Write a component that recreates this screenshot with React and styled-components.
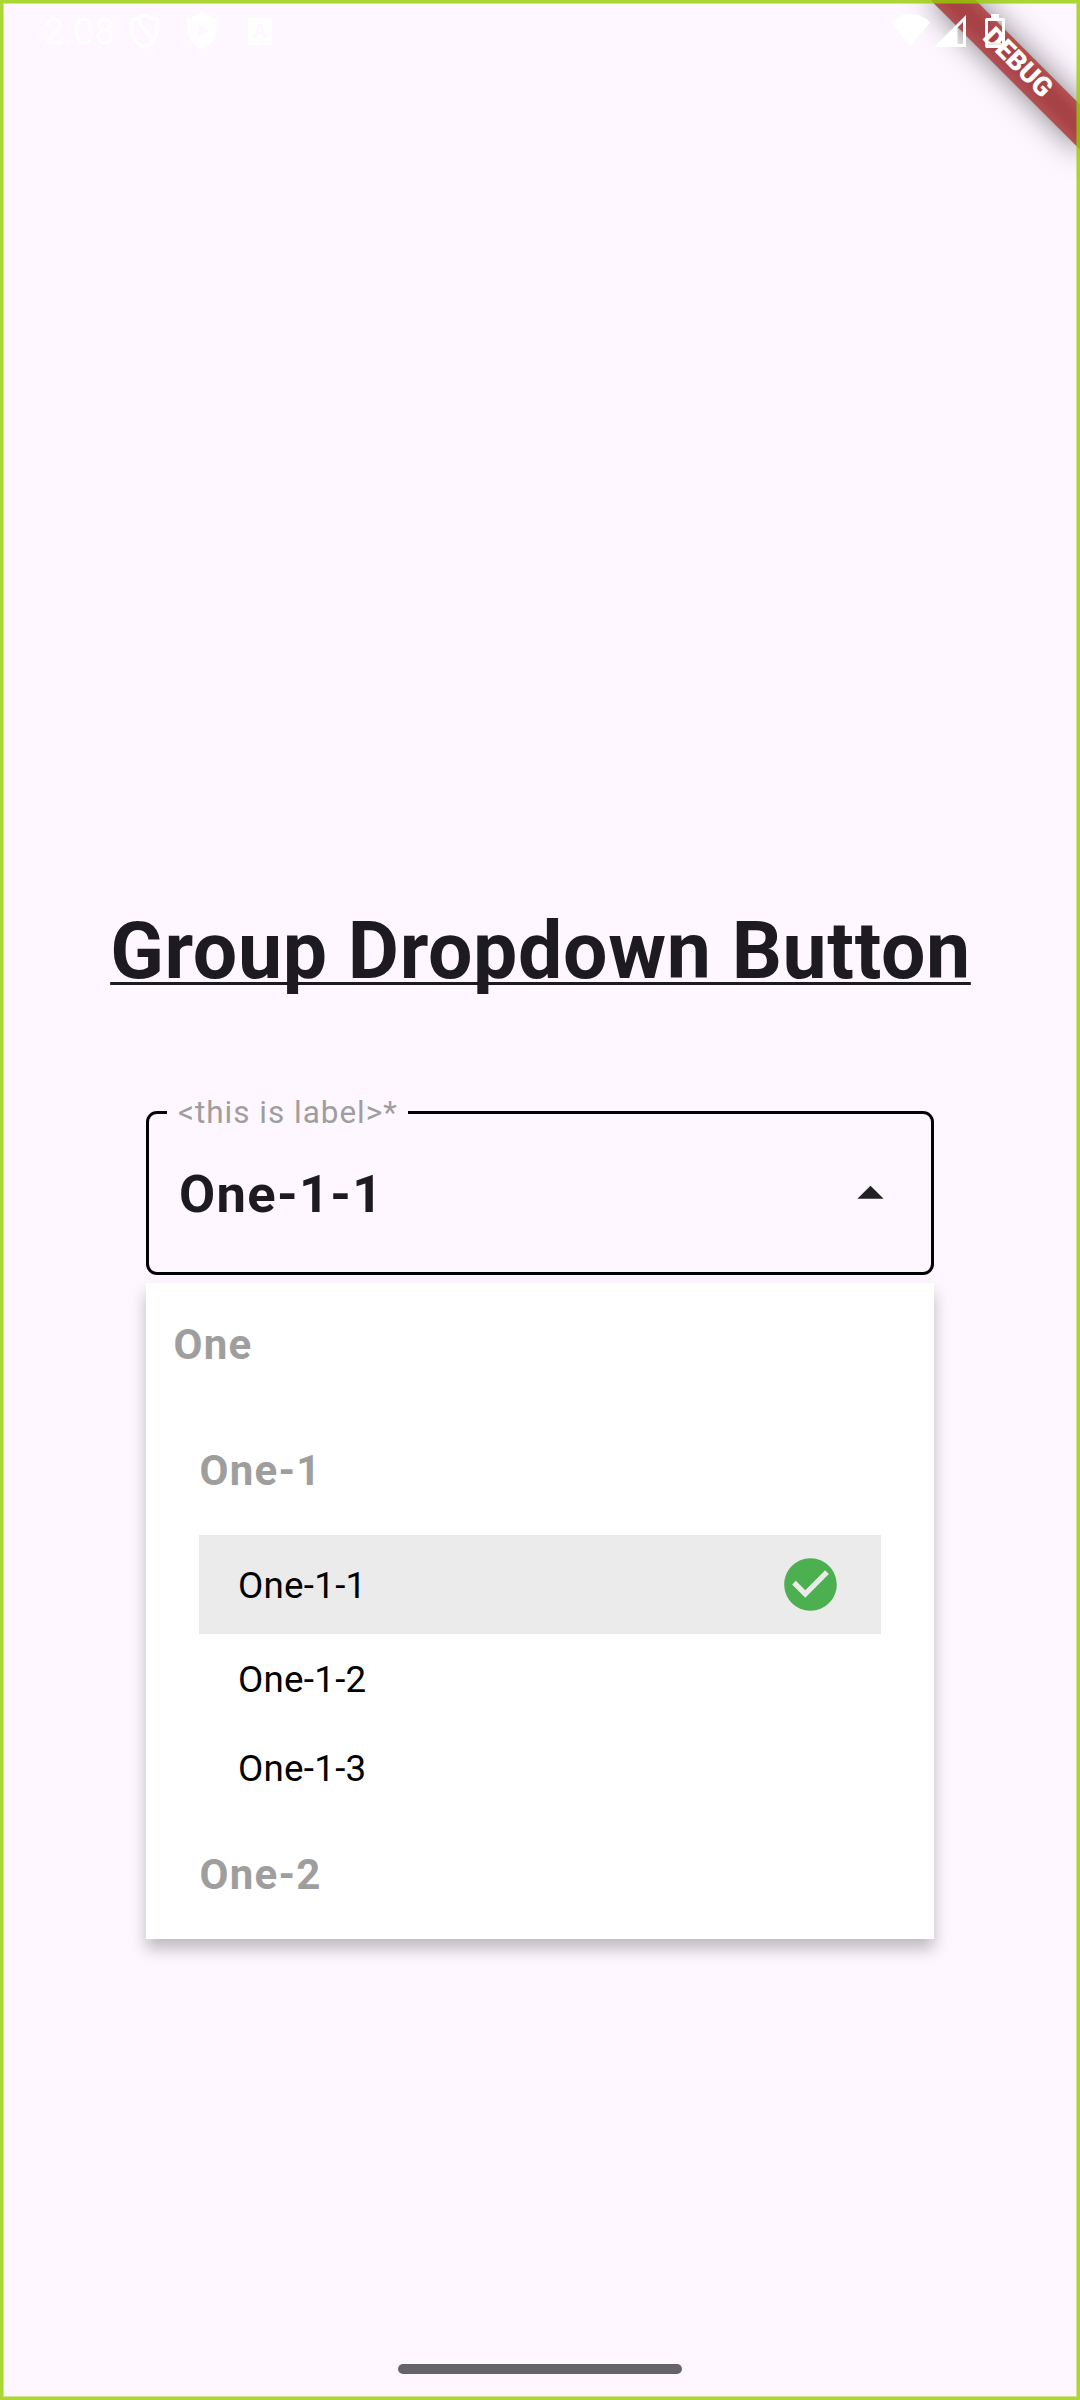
import React from "react";
import styled, { createGlobalStyle } from "styled-components";

const GlobalStyle = createGlobalStyle`
  *, *::before, *::after { box-sizing: border-box; }
  body {
    margin: 0;
    background: #fef7ff;
    font-family: Roboto, "Liberation Sans", sans-serif;
  }
`;

const Screen = styled.div`
  position: relative;
  display: flex;
  flex-direction: column;
  align-items: center;
  width: 1080px;
  height: 2400px;
  overflow: hidden;
  background: #fef7ff;
`;

const Frame = styled.div`
  position: absolute;
  inset: 0;
  border: 3px solid rgba(150, 205, 0, 0.8);
  box-shadow: inset 0 0 0 1px rgba(150, 205, 0, 0.45);
  pointer-events: none;
`;

const Ribbon = styled.div`
  position: absolute;
  top: 73.5px;
  right: -105px;
  width: 210px;
  height: 31.5px;
  transform: rotate(45deg);
  transform-origin: 105px -73.5px;
  background: linear-gradient(#b35053, #a74346 35%, #a74346 65%, #b35053);
  box-shadow: 0 0 31px rgba(0, 0, 0, 0.5);
  color: #fff;
  font-size: 26.775px;
  font-weight: 900;
  line-height: 28px;
  text-align: center;
`;

const StatusBar = styled.header`
  position: relative;
  display: flex;
  align-items: flex-start;
  justify-content: space-between;
  width: 100%;
  height: 63px;
  padding: 13px 75px 0 43px;
  color: #fff;
`;

const StatusGroup = styled.div`
  display: flex;
  align-items: flex-start;
`;

const Clock = styled.span`
  width: 87px;
  font-size: 37.5px;
  line-height: 36px;
`;

const Glyph = styled.svg`
  display: block;
  flex: none;
  width: ${(p) => p.$w}px;
  height: ${(p) => p.$h}px;
  margin-right: ${(p) => p.$gap || 0}px;
`;

const Title = styled.h1`
  margin: 842px 0 0 1px;
  font-size: 78.75px;
  font-weight: 700;
  line-height: 92px;
  letter-spacing: 0.656px;
  color: #1d1b20;
  white-space: nowrap;
  text-decoration: underline;
  text-decoration-thickness: 3px;
  text-decoration-skip-ink: none;
  text-underline-offset: 4px;
`;

const Field = styled.fieldset`
  width: 788px;
  height: 181px;
  min-width: 0;
  margin: 97px 0 0;
  padding: 0 29px 0 30px;
  border: 3px solid #000;
  border-radius: 11px;
`;

const Legend = styled.legend`
  width: 241px;
  height: 36px;
  margin-left: -12px;
  padding: 0 0 0 11px;
  font-size: 31.5px;
  line-height: 38px;
  letter-spacing: 0.984px;
  color: #9e9e9e;
  white-space: nowrap;
`;

const FieldBody = styled.div`
  display: flex;
  align-items: center;
  justify-content: space-between;
  height: 126px;
`;

const Value = styled.span`
  padding-top: 2px;
  font-size: 52.5px;
  font-weight: 700;
  line-height: 62px;
  letter-spacing: 1.3125px;
  color: #1d1b20;
`;

const Menu = styled.div`
  width: 788px;
  height: 656px;
  margin-top: 8px;
  padding: 0 53px;
  background: #fff;
  box-shadow: 0 10px 15px rgba(0, 0, 0, 0.25);
`;

const GroupLabel = styled.div`
  display: flex;
  align-items: center;
  height: ${(p) => p.$height}px;
  margin-left: ${(p) => (p.$root ? -26 : 0)}px;
  padding: 0 0 2px 0.4px;
  font-size: 42px;
  font-weight: 700;
  letter-spacing: 1.3125px;
  color: #9e9e9e;
`;

const Option = styled.div`
  display: flex;
  align-items: center;
  justify-content: space-between;
  height: ${(p) => (p.$selected ? 99 : 89)}px;
  padding: 0 39px;
  background: ${(p) => (p.$selected ? "#ebebeb" : "transparent")};
  color: #000;
  font-size: 36.75px;
  letter-spacing: 0.2625px;

  span { padding-top: 2px; }
`;

const NavHandle = styled.div`
  width: 284px;
  height: 10px;
  margin-top: 425px;
  border-radius: 5px;
  background: #666468;
`;

function ShieldIcon() {
  return (
    <Glyph $w={29} $h={36} $gap={28} viewBox="0 0 29 36">
      <path d="M14.5 2.500 27 7V17c0 8-5 14-12.500 17C7 31 2 25 2 17V7z" fill="none" stroke="#fff" strokeWidth="3.5" />
      <path d="M10 5v4c0 8 11 8 11 18" fill="none" stroke="#fff" strokeWidth="3.5" />
    </Glyph>
  );
}

function PlayShieldIcon() {
  return (
    <Glyph $w={30} $h={36} $gap={31} viewBox="0 0 30 36">
      <path fillRule="evenodd" fill="#fff" d="M15 0 29.500 5V17c0 9-6 16-14.500 19C6.500 33 .5 26 .5 17V5zM11 11v13l11-6.500z" />
    </Glyph>
  );
}

function KeyboardIcon() {
  return (
    <Glyph $w={24} $h={33} viewBox="0 -5 24 33">
      <path
        fillRule="evenodd"
        fill="#fff"
        d="M2 0h20a2 2 0 0 1 2 2v23a2 2 0 0 1-2 2H2a2 2 0 0 1-2-2V2a2 2 0 0 1 2-2zM10 6 5.500 20h3l1-3.500h5l1 3.500h3L14 6zM12 9.500l1.700 4.500h-3.400zM13 23v2h2v-2zM17 23v2h2v-2zM20.500 23v2h2v-2z"
      />
    </Glyph>
  );
}

function WifiIcon() {
  return (
    <Glyph $w={39} $h={33} $gap={4} viewBox="0 0 39 33">
      <path fill="#fff" d="M19.500 33 0 9.500C5 4 12 1 19.500 1S34 4 39 9.500z" />
    </Glyph>
  );
}

function SignalIcon() {
  return (
    <Glyph $w={32} $h={35} $gap={19} viewBox="0 0 32 35">
      <path fillRule="evenodd" fill="#fff" d="M0 34 32 2v32zM23.500 14.500V31H29V9z" />
    </Glyph>
  );
}

function BatteryIcon() {
  return (
    <Glyph $w={20} $h={36} viewBox="0 0 20 36">
      <path fillRule="evenodd" fill="#fff" d="M6 1h8v4h4a2 2 0 0 1 2 2v26a2 2 0 0 1-2 2H2a2 2 0 0 1-2-2V7a2 2 0 0 1 2-2h4zM3 8v23h14V8z" />
      <rect x="3" y="30" width="14" height="2" fill="#f8e4df" />
    </Glyph>
  );
}

function ArrowUp() {
  return (
    <Glyph $w={63} $h={63} viewBox="0 0 24 24">
      <path d="m7 14 5-5 5 5z" fill="#222" />
    </Glyph>
  );
}

function CheckCircle() {
  return (
    <Glyph $w={63} $h={63} viewBox="0 0 24 24">
      <path
        fill="#4caf50"
        d="M12 2C6.480 2 2 6.480 2 12s4.480 10 10 10 10-4.480 10-10S17.520 2 12 2zm-2 15-5-5 1.410-1.410L10 14.170l7.590-7.590L19 8l-9 9z"
      />
    </Glyph>
  );
}

const options = ["One-1-1", "One-1-2", "One-1-3"];
const selected = "One-1-1";

export default function App() {
  return (
    <>
      <GlobalStyle />
      <Screen>
        <Ribbon>DEBUG</Ribbon>
        <StatusBar>
          <StatusGroup>
            <Clock>2:08</Clock>
            <ShieldIcon />
            <PlayShieldIcon />
            <KeyboardIcon />
          </StatusGroup>
          <StatusGroup>
            <WifiIcon />
            <SignalIcon />
            <BatteryIcon />
          </StatusGroup>
        </StatusBar>
        <Title>Group Dropdown Button</Title>
        <Field>
          <Legend>{"<this is label>*"}</Legend>
          <FieldBody>
            <Value>{selected}</Value>
            <ArrowUp />
          </FieldBody>
        </Field>
        <Menu>
          <GroupLabel $root $height={124}>One</GroupLabel>
          <GroupLabel $height={128}>One-1</GroupLabel>
          {options.map((name) => (
            <Option key={name} $selected={name === selected}>
              <span>{name}</span>
              {name === selected && <CheckCircle />}
            </Option>
          ))}
          <GroupLabel $height={126}>One-2</GroupLabel>
        </Menu>
        <NavHandle />
        <Frame />
      </Screen>
    </>
  );
}
